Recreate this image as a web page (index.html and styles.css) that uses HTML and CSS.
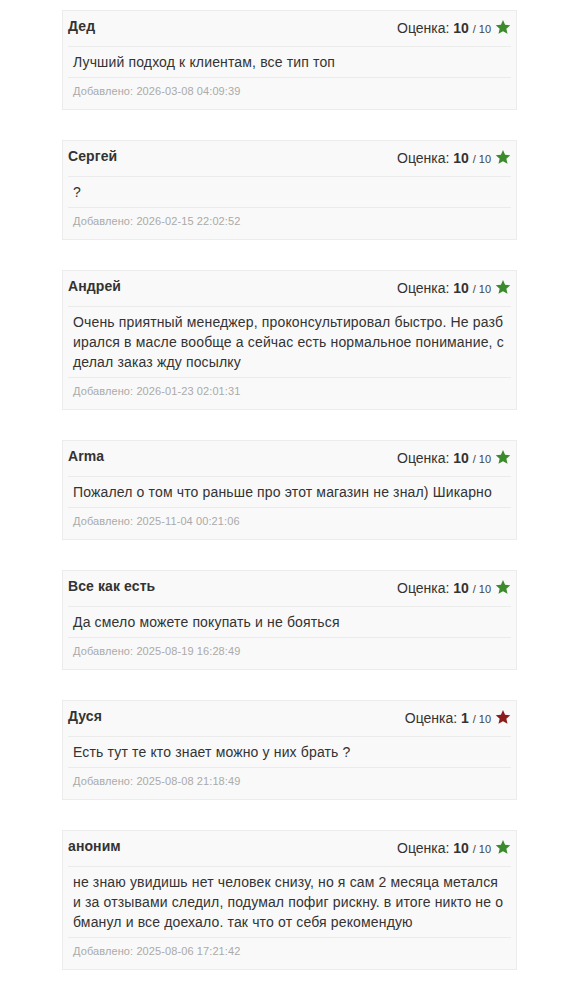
FILE: index.html
```html
<!DOCTYPE html>
<html lang="ru">
<head>
<meta charset="utf-8">
<title>Отзывы</title>
<link rel="stylesheet" href="styles.css">
</head>
<body>
<div class="reviews">

<div class="review">
  <div class="review-head">
    <span class="name">Дед</span>
    <span class="rating">Оценка: <b>10</b> <small>/ 10</small> <svg class="star good" viewBox="0 0 24 24"><path d="M12 1.5l3.1 7.2 7.8.7-5.9 5.2 1.8 7.7L12 18.2l-6.8 4.1 1.8-7.7-5.9-5.2 7.8-.7z"/></svg></span>
  </div>
  <div class="review-text">Лучший подход к клиентам, все тип топ</div>
  <div class="review-date">Добавлено: 2026-03-08 04:09:39</div>
</div>

<div class="review">
  <div class="review-head">
    <span class="name">Сергей</span>
    <span class="rating">Оценка: <b>10</b> <small>/ 10</small> <svg class="star good" viewBox="0 0 24 24"><path d="M12 1.5l3.1 7.2 7.8.7-5.9 5.2 1.8 7.7L12 18.2l-6.8 4.1 1.8-7.7-5.9-5.2 7.8-.7z"/></svg></span>
  </div>
  <div class="review-text">?</div>
  <div class="review-date">Добавлено: 2026-02-15 22:02:52</div>
</div>

<div class="review">
  <div class="review-head">
    <span class="name">Андрей</span>
    <span class="rating">Оценка: <b>10</b> <small>/ 10</small> <svg class="star good" viewBox="0 0 24 24"><path d="M12 1.5l3.1 7.2 7.8.7-5.9 5.2 1.8 7.7L12 18.2l-6.8 4.1 1.8-7.7-5.9-5.2 7.8-.7z"/></svg></span>
  </div>
  <div class="review-text">Очень приятный менеджер, проконсультировал быстро. Не разбирался в масле вообще а сейчас есть нормальное понимание, сделал заказ жду посылку</div>
  <div class="review-date">Добавлено: 2026-01-23 02:01:31</div>
</div>

<div class="review">
  <div class="review-head">
    <span class="name">Arma</span>
    <span class="rating">Оценка: <b>10</b> <small>/ 10</small> <svg class="star good" viewBox="0 0 24 24"><path d="M12 1.5l3.1 7.2 7.8.7-5.9 5.2 1.8 7.7L12 18.2l-6.8 4.1 1.8-7.7-5.9-5.2 7.8-.7z"/></svg></span>
  </div>
  <div class="review-text">Пожалел о том что раньше про этот магазин не знал) Шикарно</div>
  <div class="review-date">Добавлено: 2025-11-04 00:21:06</div>
</div>

<div class="review">
  <div class="review-head">
    <span class="name">Все как есть</span>
    <span class="rating">Оценка: <b>10</b> <small>/ 10</small> <svg class="star good" viewBox="0 0 24 24"><path d="M12 1.5l3.1 7.2 7.8.7-5.9 5.2 1.8 7.7L12 18.2l-6.8 4.1 1.8-7.7-5.9-5.2 7.8-.7z"/></svg></span>
  </div>
  <div class="review-text">Да смело можете покупать и не бояться</div>
  <div class="review-date">Добавлено: 2025-08-19 16:28:49</div>
</div>

<div class="review">
  <div class="review-head">
    <span class="name">Дуся</span>
    <span class="rating">Оценка: <b>1</b> <small>/ 10</small> <svg class="star bad" viewBox="0 0 24 24"><path d="M12 1.5l3.1 7.2 7.8.7-5.9 5.2 1.8 7.7L12 18.2l-6.8 4.1 1.8-7.7-5.9-5.2 7.8-.7z"/></svg></span>
  </div>
  <div class="review-text">Есть тут те кто знает можно у них брать ?</div>
  <div class="review-date">Добавлено: 2025-08-08 21:18:49</div>
</div>

<div class="review">
  <div class="review-head">
    <span class="name">аноним</span>
    <span class="rating">Оценка: <b>10</b> <small>/ 10</small> <svg class="star good" viewBox="0 0 24 24"><path d="M12 1.5l3.1 7.2 7.8.7-5.9 5.2 1.8 7.7L12 18.2l-6.8 4.1 1.8-7.7-5.9-5.2 7.8-.7z"/></svg></span>
  </div>
  <div class="review-text">не знаю увидишь нет человек снизу, но я сам 2 месяца метался и за отзывами следил, подумал пофиг рискну. в итоге никто не обманул и все доехало. так что от себя рекомендую</div>
  <div class="review-date">Добавлено: 2025-08-06 17:21:42</div>
</div>

</div>
</body>
</html>
```

FILE: styles.css
```css
* { box-sizing: border-box; }
html, body { margin: 0; padding: 0; background: #fff; }
body {
  font-family: "Liberation Sans", Arial, Helvetica, sans-serif;
  color: #333;
  font-size: 14px;
}
.reviews {
  display: flex;
  flex-direction: column;
  gap: 30px;
  padding: 10px 0 0 62px;
}
.review {
  width: 455px;
  background: #f9f9f9;
  border: 1px solid #ececec;
  padding: 6px 5px 6px 5px;
}
.review-head {
  display: flex;
  justify-content: space-between;
  align-items: flex-start;
  height: 30px;
  border-bottom: 1px solid #ebebeb;
}
.name {
  font-weight: bold;
  font-size: 14px;
  line-height: 18px;
  letter-spacing: 0.1px;
}
.rating {
  margin-top: 2px;
  line-height: 18px;
  font-size: 14px;
  white-space: nowrap;
}
.rating b { font-weight: bold; }
.rating small { font-size: 11px; color: #444; }
.star {
  width: 16px;
  height: 16px;
  vertical-align: -2px;
}
.star.good { fill: #3b8a2b; }
.star.bad { fill: #8b1c1c; }
.review-text {
  padding: 5px 7px 5px 5px;
  line-height: 20px;
  font-size: 14px;
  letter-spacing: 0.15px;
  word-break: break-all;
  border-bottom: 1px solid #ebebeb;
}
.review-date {
  padding: 6px 5px 5px 5px;
  font-size: 11px;
  line-height: 14px;
  letter-spacing: 0.1px;
  color: #aaa;
}
```
